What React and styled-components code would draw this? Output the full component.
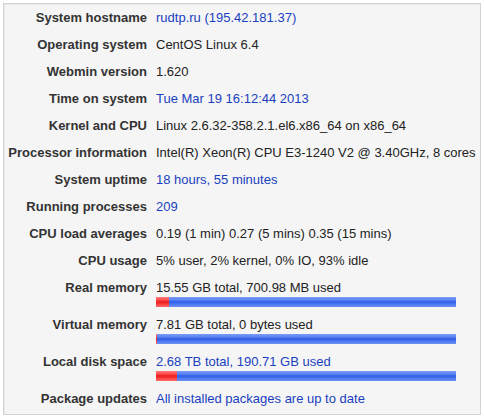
import React from 'react'
import styled, { createGlobalStyle } from 'styled-components'

const GlobalStyle = createGlobalStyle`
  html, body {
    margin: 0;
    padding: 0;
    background: #ffffff;
  }
  body {
    font-family: "Liberation Sans", Arial, sans-serif;
    font-size: 13px;
    color: #222;
  }
`

const rows = [
  { label: 'System hostname', value: 'rudtp.ru (195.42.181.37)', link: true },
  { label: 'Operating system', value: 'CentOS Linux 6.4' },
  { label: 'Webmin version', value: '1.620' },
  { label: 'Time on system', value: 'Tue Mar 19 16:12:44 2013', link: true },
  { label: 'Kernel and CPU', value: 'Linux 2.6.32-358.2.1.el6.x86_64 on x86_64' },
  { label: 'Processor information', value: 'Intel(R) Xeon(R) CPU E3-1240 V2 @ 3.40GHz, 8 cores' },
  { label: 'System uptime', value: '18 hours, 55 minutes', link: true },
  { label: 'Running processes', value: '209', link: true },
  { label: 'CPU load averages', value: '0.19 (1 min) 0.27 (5 mins) 0.35 (15 mins)' },
  { label: 'CPU usage', value: '5% user, 2% kernel, 0% IO, 93% idle' },
  { label: 'Real memory', value: '15.55 GB total, 700.98 MB used', used: 0.044 },
  { label: 'Virtual memory', value: '7.81 GB total, 0 bytes used', used: 0.003 },
  { label: 'Local disk space', value: '2.68 TB total, 190.71 GB used', link: true, used: 0.07 },
  { label: 'Package updates', value: 'All installed packages are up to date', link: true },
]

const App = () => {
  return (
    <>
      <GlobalStyle />
      <Panel>
        {rows.map((row, index) => (
          <Row key={index}>
            <Label>{row.label}</Label>
            <Value>
              {row.link ? <Link href="#">{row.value}</Link> : <span>{row.value}</span>}
              {row.used !== undefined && (
                <Bar>
                  <Used style={{ width: `${Math.max(1, Math.round(row.used * 300))}px` }} />
                </Bar>
              )}
            </Value>
          </Row>
        ))}
      </Panel>
    </>
  )
}

const Panel = styled.div`
  margin: 3px;
  width: 478px;
  height: 412px;
  box-sizing: border-box;
  border: 1px solid #d4d4d4;
  box-shadow: inset 1px 1px 0 #e8e8e8;
  background: #f5f5f5;
  padding-top: 0;
`

const Row = styled.div`
  display: grid;
  grid-template-columns: 143px 1fr;
  column-gap: 9px;
  padding: 5px 0;
  line-height: 17px;
`

const Label = styled.div`
  text-align: right;
  font-weight: bold;
  color: #333;
  white-space: nowrap;
`

const Value = styled.div`
  display: flex;
  flex-direction: column;
  align-items: flex-start;
  white-space: nowrap;
  color: #222;
`

const Link = styled.a`
  color: #1a3fbf;
  text-decoration: none;
`

const Bar = styled.div`
  width: 300px;
  height: 10px;
  margin: 1px 0 -1px;
  display: flex;
  background: linear-gradient(
    to bottom,
    #7a9cf6 0%,
    #5b83f2 30%,
    #2f5de8 50%,
    #4a76f0 70%,
    #6d91f4 100%
  );
`

const Used = styled.div`
  height: 100%;
  background: linear-gradient(
    to bottom,
    #ff7c7c 0%,
    #ff4a4a 30%,
    #e81c1c 50%,
    #f83c3c 70%,
    #ff6a6a 100%
  );
`

export default App
